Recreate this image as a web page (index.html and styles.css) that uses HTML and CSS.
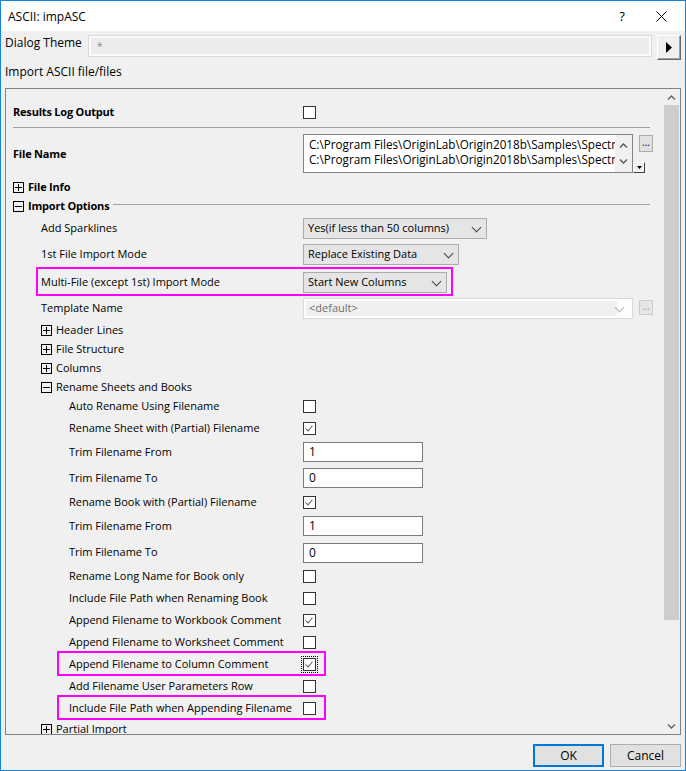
FILE: index.html
```html
<!DOCTYPE html>
<html lang="en">
<head>
    <meta charset="UTF-8">
    <title>ASCII: impASC</title>
    <link rel="stylesheet" href="styles.css">
</head>
<body>
<div class="window">
    <div class="titlebar">
        <span class="title">ASCII: impASC</span>
        <span class="tb-help">?</span>
        <span class="tb-close">
            <svg width="11" height="11" viewBox="0 0 11 11"><path d="M0.5 0.5 L10.5 10.5 M10.5 0.5 L0.5 10.5" stroke="#000" stroke-width="1"/></svg>
        </span>
    </div>

    <div class="content">
        <div class="theme-row">
            <span class="theme-label">Dialog Theme</span>
            <div class="theme-box">*</div>
            <div class="arrow-btn">
                <svg width="6" height="11" viewBox="0 0 6 11"><path d="M0 0 L6 5.5 L0 11 Z" fill="#000"/></svg>
            </div>
        </div>
        <div class="desc">Import ASCII file/files</div>

        <div class="panel">
            <div class="tree">
                <div class="row h24">
                    <span class="lbl l0 bold">Results Log Output</span>
                    <span class="chk"></span>
                </div>
                <div class="sep"></div>

                <div class="row h40 filerow">
                    <span class="lbl l0 bold">File Name</span>
                    <div class="file-ctl">
                        <div class="listbox">
                            <div class="list-lines">
                                <div>C:\Program Files\OriginLab\Origin2018b\Samples\Spectroscopy\Peaks.dat</div>
                                <div>C:\Program Files\OriginLab\Origin2018b\Samples\Spectroscopy\Peaks2.dat</div>
                            </div>
                            <div class="list-arrows">
                                <svg width="9" height="5" viewBox="0 0 9 5"><path d="M1 4.5 L4.5 1 L8 4.5" fill="none" stroke="#555" stroke-width="1.3"/></svg>
                                <svg width="9" height="5" viewBox="0 0 9 5"><path d="M1 0.5 L4.5 4 L8 0.5" fill="none" stroke="#555" stroke-width="1.3"/></svg>
                            </div>
                        </div>
                        <div class="file-btns">
                            <span class="dots-btn">...</span>
                            <span class="mini-drop">
                                <svg width="5" height="3" viewBox="0 0 5 3"><path d="M0 0 L5 0 L2.5 3 Z" fill="#000"/></svg>
                            </span>
                        </div>
                    </div>
                </div>

                <div class="node h20 n0">
                    <span class="exp plus"></span><span class="txt bold">File Info</span>
                </div>
                <div class="node h19 n0">
                    <span class="exp minus"></span><span class="txt bold">Import Options</span><span class="group-line"></span>
                </div>

                <div class="row h24">
                    <span class="lbl l1">Add Sparklines</span>
                    <span class="combo w184">Yes(if less than 50 columns)<i class="chev"></i></span>
                </div>
                <div class="row h28">
                    <span class="lbl l1">1st File Import Mode</span>
                    <span class="combo w156">Replace Existing Data<i class="chev"></i></span>
                </div>
                <div class="row h28 hl-multi">
                    <span class="lbl l1">Multi-File (except 1st) Import Mode</span>
                    <span class="combo w144">Start New Columns<i class="chev"></i></span>
                </div>
                <div class="row h24">
                    <span class="lbl l1">Template Name</span>
                    <div class="tpl-ctl">
                        <span class="tpl-combo"><span class="tpl-field">&lt;default&gt;</span><i class="chev light"></i></span>
                        <span class="dots-btn off">...</span>
                    </div>
                </div>

                <div class="node h20 n1">
                    <span class="exp plus"></span><span class="txt">Header Lines</span>
                </div>
                <div class="node h19 n1">
                    <span class="exp plus"></span><span class="txt">File Structure</span>
                </div>
                <div class="node h19 n1">
                    <span class="exp plus"></span><span class="txt">Columns</span>
                </div>
                <div class="node h19 n1">
                    <span class="exp minus"></span><span class="txt">Rename Sheets and Books</span>
                </div>

                <div class="row h19">
                    <span class="lbl l2">Auto Rename Using Filename</span>
                    <span class="chk"></span>
                </div>
                <div class="row h24">
                    <span class="lbl l2">Rename Sheet with (Partial) Filename</span>
                    <span class="chk on"></span>
                </div>
                <div class="row h24">
                    <span class="lbl l2">Trim Filename From</span>
                    <span class="edit">1</span>
                </div>
                <div class="row h28">
                    <span class="lbl l2">Trim Filename To</span>
                    <span class="edit">0</span>
                </div>
                <div class="row h20">
                    <span class="lbl l2">Rename Book with (Partial) Filename</span>
                    <span class="chk on"></span>
                </div>
                <div class="row h28">
                    <span class="lbl l2">Trim Filename From</span>
                    <span class="edit">1</span>
                </div>
                <div class="row h25">
                    <span class="lbl l2">Trim Filename To</span>
                    <span class="edit">0</span>
                </div>
                <div class="row">
                    <span class="lbl l2">Rename Long Name for Book only</span>
                    <span class="chk"></span>
                </div>
                <div class="row">
                    <span class="lbl l2">Include File Path when Renaming Book</span>
                    <span class="chk"></span>
                </div>
                <div class="row">
                    <span class="lbl l2">Append Filename to Workbook Comment</span>
                    <span class="chk on"></span>
                </div>
                <div class="row">
                    <span class="lbl l2">Append Filename to Worksheet Comment</span>
                    <span class="chk"></span>
                </div>
                <div class="row hl-item">
                    <span class="lbl l2">Append Filename to Column Comment</span>
                    <span class="chk on focus"></span>
                </div>
                <div class="row">
                    <span class="lbl l2">Add Filename User Parameters Row</span>
                    <span class="chk"></span>
                </div>
                <div class="row hl-item">
                    <span class="lbl l2">Include File Path when Appending Filename</span>
                    <span class="chk"></span>
                </div>
                <div class="node n1 last">
                    <span class="exp plus"></span><span class="txt">Partial Import</span>
                </div>
            </div>

            <div class="vscroll">
                <div class="sb-arrow">
                    <svg width="9" height="5" viewBox="0 0 9 5"><path d="M1 4.5 L4.5 1 L8 4.5" fill="none" stroke="#606060" stroke-width="1.4"/></svg>
                </div>
                <div class="sb-thumb"></div>
                <div class="sb-track"></div>
                <div class="sb-arrow">
                    <svg width="9" height="5" viewBox="0 0 9 5"><path d="M1 0.5 L4.5 4 L8 0.5" fill="none" stroke="#606060" stroke-width="1.4"/></svg>
                </div>
            </div>
        </div>

        <div class="footer">
            <button class="btn default">OK</button>
            <button class="btn">Cancel</button>
        </div>
    </div>
</div>
</body>
</html>
```

FILE: styles.css
```css
html, body {
    margin: 0;
    padding: 0;
}
body {
    font-family: "Open Sans", "Noto Sans", sans-serif;
    font-size: 11px;
    color: #000;
    background: #f0f0f0;
}
.window {
    width: 686px;
    height: 771px;
    box-sizing: border-box;
    border: 1px solid #1883d7;
    background: #f0f0f0;
    display: flex;
    flex-direction: column;
}

/* title bar */
.titlebar {
    height: 30px;
    background: #fff;
    display: flex;
    align-items: center;
    flex-shrink: 0;
}
.title {
    padding-left: 7px;
    font-size: 12px;
    flex: 1;
}
.tb-help {
    font-size: 13px;
    width: 20px;
    text-align: center;
    margin-right: 24px;
}
.tb-close {
    width: 11px;
    height: 11px;
    display: flex;
    margin-right: 18px;
}

.content {
    flex: 1;
    display: flex;
    flex-direction: column;
    padding: 0 4px;
}

/* dialog theme */
.theme-row {
    display: flex;
    margin-top: 4px;
    height: 25px;
}
.theme-label {
    width: 83px;
    font-size: 12px;
    line-height: 16px;
}
.theme-box {
    flex: 1;
    height: 22px;
    box-sizing: border-box;
    border: 1px solid #dadada;
    box-shadow: inset 0 0 0 2px #fafafa;
    background: #ececec;
    color: #8a8a8a;
    padding: 3px 8px;
    font-size: 10px;
}
.arrow-btn {
    width: 24px;
    height: 25px;
    margin-left: 5px;
    box-sizing: border-box;
    border-top: 1px solid #fff;
    border-left: 1px solid #fff;
    border-right: 1px solid #696969;
    border-bottom: 1px solid #696969;
    box-shadow: inset -1px -1px 0 #a0a0a0;
    background: #f0f0f0;
    display: flex;
    align-items: center;
    justify-content: center;
}
.desc {
    margin-top: 4px;
    height: 16px;
    line-height: 15px;
    font-size: 12px;
}

/* main property panel */
.panel {
    margin-top: 8px;
    height: 647px;
    box-sizing: border-box;
    border: 1px solid #828282;
    display: flex;
    overflow: hidden;
}
.tree {
    flex: 1;
    padding-top: 11px;
    overflow: hidden;
}
.row {
    height: 22px;
    display: grid;
    grid-template-columns: 297px auto;
    align-items: center;
    position: relative;
}
.node {
    height: 22px;
    display: flex;
    align-items: center;
}
.h19 { height: 19px; }
.h20 { height: 20px; }
.h24 { height: 24px; }
.h25 { height: 25px; }
.h28 { height: 28px; }
.h40 { height: 40px; }

.lbl {
    white-space: nowrap;
    padding-bottom: 2px;
}
.txt {
    white-space: nowrap;
    padding-bottom: 2px;
}
.l0 { padding-left: 7px; }
.l1 { padding-left: 35px; }
.l2 { padding-left: 63px; }
.n0 { padding-left: 7px; }
.n1 { padding-left: 35px; }
.bold {
    font-weight: bold;
    letter-spacing: -0.2px;
}
.last { height: 20px; }

.sep {
    height: 1px;
    background: #a0a0a0;
    margin: 3px 13px 0 7px;
}
.filerow {
    margin-top: 6px;
    align-items: start;
}
.filerow .lbl { align-self: center; }
.filerow + .node { margin-top: 3px; }

.exp {
    width: 11px;
    height: 11px;
    box-sizing: border-box;
    border: 1px solid #000;
    margin-right: 4px;
    position: relative;
    flex-shrink: 0;
}
.exp::before {
    content: "";
    position: absolute;
    left: 1px;
    top: 4px;
    width: 7px;
    height: 1px;
    background: #000;
}
.plus::after {
    content: "";
    position: absolute;
    left: 4px;
    top: 1px;
    width: 1px;
    height: 7px;
    background: #000;
}
.group-line {
    flex: 1;
    height: 1px;
    background: #a0a0a0;
    margin: 0 13px 4px 4px;
}

/* controls */
.chk {
    width: 13px;
    height: 13px;
    box-sizing: border-box;
    border: 1px solid #333;
    background: #fff;
    position: relative;
}
.chk.on::after {
    content: "";
    position: absolute;
    left: 3px;
    top: 1px;
    width: 3px;
    height: 6px;
    border-right: 1.5px solid #5a5a5a;
    border-bottom: 1.5px solid #5a5a5a;
    transform: rotate(40deg);
}
.chk.focus {
    outline: 1px dotted #000;
    outline-offset: 1px;
}
.combo {
    height: 21px;
    box-sizing: border-box;
    border: 1px solid #acacac;
    background: #e5e5e5;
    display: flex;
    align-items: center;
    padding-left: 4px;
    padding-bottom: 1px;
    position: relative;
    white-space: nowrap;
}
.w184 { width: 184px; }
.w156 { width: 156px; }
.w144 { width: 144px; }
.chev {
    position: absolute;
    right: 6px;
    top: 5px;
    width: 6px;
    height: 6px;
    border-right: 1px solid #444;
    border-bottom: 1px solid #444;
    transform: rotate(45deg);
}
.chev.light {
    border-color: #b5b5b5;
    top: 5px;
    right: 9px;
}
.tpl-ctl {
    display: flex;
    align-items: flex-start;
}
.tpl-combo {
    width: 330px;
    height: 21px;
    box-sizing: border-box;
    border: 1px solid #d9d9d9;
    background: #fff;
    position: relative;
    padding: 2px;
    display: flex;
}
.tpl-field {
    width: 308px;
    background: #f0f0f0;
    color: #6d6d6d;
    padding-left: 3px;
    line-height: 14px;
}
.dots-btn {
    width: 14px;
    height: 17px;
    box-sizing: border-box;
    border: 1px solid #adadad;
    background: #e1e1e1;
    font-size: 10px;
    text-align: center;
    line-height: 13px;
    margin-left: 6px;
    margin-top: 1px;
}
.dots-btn.off {
    border-color: #cccccc;
    background: #e6e6e6;
    color: #a0a0a0;
    margin-top: 2px;
    height: 15px;
    line-height: 11px;
}
.edit {
    width: 120px;
    height: 20px;
    box-sizing: border-box;
    border: 1px solid #7a7a7a;
    background: #fff;
    padding-left: 5px;
    line-height: 17px;
    font-size: 12px;
}

/* file name list */
.file-ctl {
    display: flex;
}
.listbox {
    width: 330px;
    height: 39px;
    box-sizing: border-box;
    border: 1px solid #828282;
    background: #fff;
    display: flex;
}
.list-lines {
    flex: 1;
    overflow: hidden;
    white-space: nowrap;
    padding: 2px 0 0 5px;
    font-size: 11.7px;
    line-height: 15px;
}
.list-arrows {
    width: 17px;
    background: #f0f0f0;
    display: flex;
    flex-direction: column;
    align-items: center;
    justify-content: space-around;
    padding: 3px 0;
    box-sizing: border-box;
}
.file-btns {
    display: flex;
    flex-direction: column;
    align-items: flex-start;
}
.mini-drop {
    width: 12px;
    height: 11px;
    box-sizing: border-box;
    margin-top: 10px;
    border-top: 1px solid #fff;
    border-left: 1px solid #fff;
    border-right: 1px solid #404040;
    border-bottom: 1px solid #404040;
    background: #f0f0f0;
    display: flex;
    align-items: center;
    justify-content: center;
}

/* highlight boxes */
.hl-multi::after,
.hl-item::after {
    content: "";
    position: absolute;
    box-sizing: border-box;
    border: 2px solid #ff00ff;
    pointer-events: none;
}
.hl-multi::after {
    left: 30px;
    top: -1px;
    width: 417px;
    height: 29px;
}
.hl-item::after {
    left: 51px;
    top: -2px;
    width: 269px;
    height: 25px;
}

/* scrollbar */
.vscroll {
    width: 17px;
    display: flex;
    flex-direction: column;
    background: #f0f0f0;
}
.sb-arrow {
    height: 16px;
    display: flex;
    align-items: center;
    justify-content: center;
}
.sb-thumb {
    height: 515px;
    margin: 0 1px;
    background: #cdcdcd;
}
.sb-track { flex: 1; }

/* footer */
.footer {
    display: flex;
    justify-content: flex-end;
    gap: 6px;
    margin-top: 9px;
}
.btn {
    width: 71px;
    height: 23px;
    box-sizing: border-box;
    border: 1px solid #adadad;
    background: #e1e1e1;
    font-family: "Open Sans", "Noto Sans", sans-serif;
    font-size: 12px;
    padding: 0;
    color: #000;
}
.btn.default {
    border: 2px solid #0078d7;
}
```
